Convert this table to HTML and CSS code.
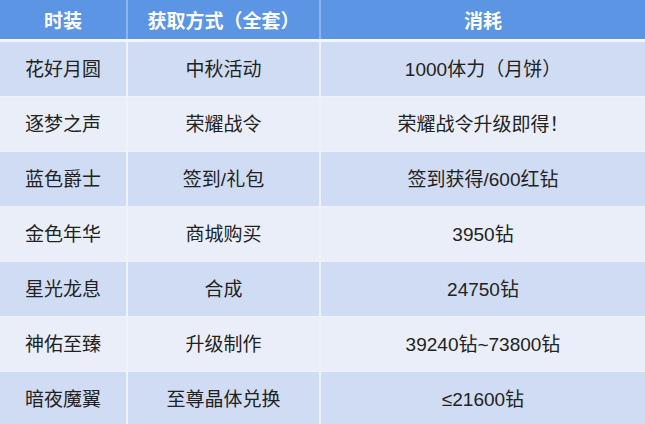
FILE: index.html
```html
<!DOCTYPE html>
<html lang="zh">
<head>
<meta charset="utf-8">
<link rel="stylesheet" href="styles.css">
</head>
<body>
<table class="tbl">
  <colgroup>
    <col class="c1"><col class="c2"><col class="c3">
  </colgroup>
  <thead>
    <tr><th>时装</th><th>获取方式（全套）</th><th>消耗</th></tr>
  </thead>
  <tbody>
    <tr class="odd"><td>花好月圆</td><td>中秋活动</td><td>1000体力（月饼）</td></tr>
    <tr class="even"><td>逐梦之声</td><td>荣耀战令</td><td>荣耀战令升级即得！</td></tr>
    <tr class="odd"><td>蓝色爵士</td><td>签到/礼包</td><td>签到获得/600红钻</td></tr>
    <tr class="even"><td>金色年华</td><td>商城购买</td><td>3950钻</td></tr>
    <tr class="odd"><td>星光龙息</td><td>合成</td><td>24750钻</td></tr>
    <tr class="even"><td>神佑至臻</td><td>升级制作</td><td>39240钻~73800钻</td></tr>
    <tr class="odd"><td>暗夜魔翼</td><td>至尊晶体兑换</td><td>≤21600钻</td></tr>
  </tbody>
</table>
</body>
</html>
```
FILE: styles.css
```css
html, body {
  margin: 0;
  padding: 0;
  background: #ffffff;
}
body {
  width: 645px;
  height: 424px;
  overflow: hidden;
  font-family: "Liberation Sans", "Noto Sans CJK SC", sans-serif;
}
.tbl {
  width: 645px;
  border-collapse: collapse;
  table-layout: fixed;
}
.c1 { width: 127px; }
.c2 { width: 193px; }
.c3 { width: 325px; }
.tbl th {
  height: 39px;
  padding: 0;
  background: #5b95e3;
  color: #ffffff;
  font-size: 19px;
  font-weight: bold;
  text-align: center;
  vertical-align: middle;
  border-bottom: 3px solid #f4f7fd;
  border-left: 2px solid #8fb6ec;
}
.tbl th:first-child, .tbl td:first-child { border-left: none; }
.tbl td {
  height: 51px;
  padding: 0 0 3px 0;
  font-size: 19px;
  color: #222222;
  text-align: center;
  vertical-align: middle;
  border-top: 1px solid #eef2fb;
  border-left: 2px solid #eef2fb;
}
.odd td { background: #d0dcf3; }
.even td { background: #e9eef9; }
```
